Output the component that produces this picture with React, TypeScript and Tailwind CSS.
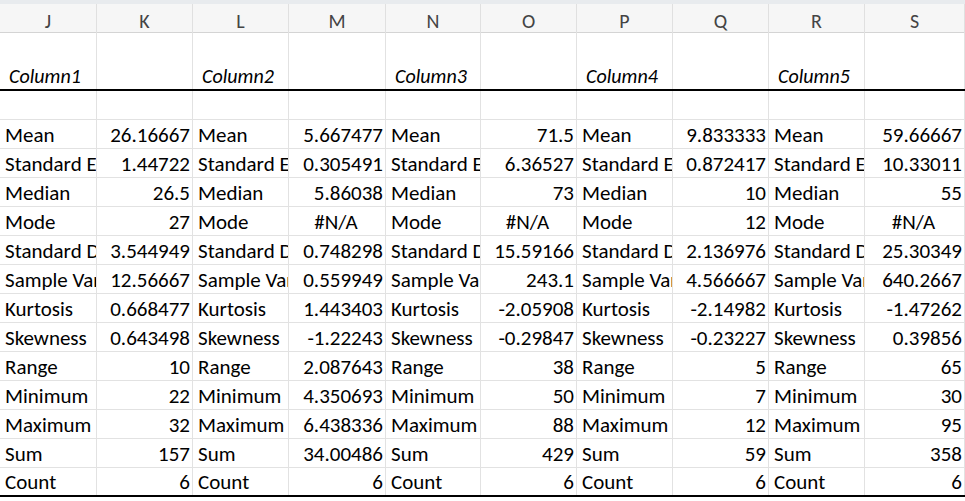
const cols = ["J", "K", "L", "M", "N", "O", "P", "Q", "R", "S"];
const labels = ["Mean", "Standard Error", "Median", "Mode", "Standard Deviation", "Sample Variance", "Kurtosis", "Skewness", "Range", "Minimum", "Maximum", "Sum", "Count"];
const data = [
  ["26.16667", "1.44722", "26.5", "27", "3.544949", "12.56667", "0.668477", "0.643498", "10", "22", "32", "157", "6"],
  ["5.667477", "0.305491", "5.86038", "#N/A", "0.748298", "0.559949", "1.443403", "-1.22243", "2.087643", "4.350693", "6.438336", "34.00486", "6"],
  ["71.5", "6.36527", "73", "#N/A", "15.59166", "243.1", "-2.05908", "-0.29847", "38", "50", "88", "429", "6"],
  ["9.833333", "0.872417", "10", "12", "2.136976", "4.566667", "-2.14982", "-0.23227", "5", "7", "12", "59", "6"],
  ["59.66667", "10.33011", "55", "#N/A", "25.30349", "640.2667", "-1.47262", "0.39856", "65", "30", "95", "358", "6"],
];
const grid = "grid grid-cols-[97px_96px_96px_97px_95px_96px_96px_96px_96px_1fr]";

export default function App() {
  return (
    <div className="w-[965px] h-[501px] bg-white overflow-hidden text-[21px] text-black" style={{ fontFamily: "Calibri, Carlito, 'Liberation Sans', sans-serif" }}>
      <div className="h-[4px] bg-[#e8ebee]" />
      <div className={`${grid} h-[29px] bg-[#f6f6f6] border-b border-[#d4d4d4] text-[#444] text-[20px]`}>
        {cols.map((c) => (
          <div key={c} className="flex items-center justify-center border-r border-[#e0e0e0] pt-[2px]">{c}</div>
        ))}
      </div>
      <div className={`${grid} h-[58px] border-b-2 border-black`}>
        {cols.map((c, i) => (
          <div key={c} className="flex items-end pl-[9px] pb-[1px] italic border-r border-[#e2e2e2] leading-6 text-[20px]">
            {i % 2 === 0 ? `Column${i / 2 + 1}` : ""}
          </div>
        ))}
      </div>
      <div className={`${grid} h-[29px] border-b border-[#e2e2e2]`}>
        {cols.map((c) => <div key={c} className="border-r border-[#e2e2e2]" />)}
      </div>
      {labels.map((l, r) => (
        <div key={l} className={`${grid} h-[29px] ${r === labels.length - 1 ? "border-b-2 border-black" : "border-b border-[#e2e2e2]"}`}>
          {data.map((d, i) => [
            <div key={`l${i}`} className="flex items-center pl-[5px] pt-[3px] overflow-hidden whitespace-nowrap border-r border-[#e2e2e2]">{l}</div>,
            <div key={`v${i}`} className={`flex items-center pr-[2px] pt-[3px] overflow-hidden whitespace-nowrap border-r border-[#e2e2e2] ${d[r] === "#N/A" ? "justify-center" : "justify-end"}`}>{d[r]}</div>,
          ])}
        </div>
      ))}
    </div>
  );
}
